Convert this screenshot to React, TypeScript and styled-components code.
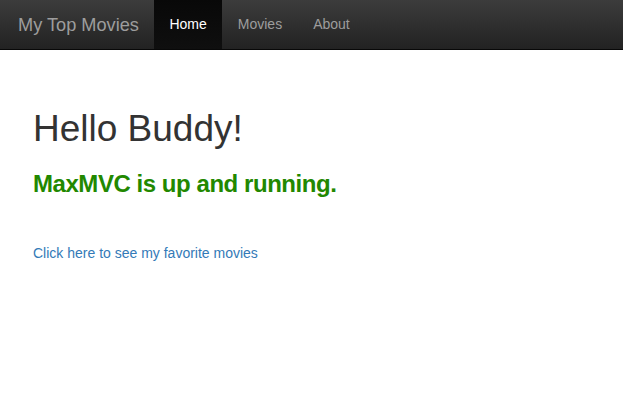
import React from "react";
import styled, { createGlobalStyle } from "styled-components";

const Global = createGlobalStyle`
  html, body { margin: 0; padding: 0; background: #fff; }
  body {
    font-family: "Liberation Sans", Arial, Helvetica, sans-serif;
    font-size: 14px;
    line-height: 1.42857;
    color: #333;
  }
  * { box-sizing: border-box; }
`;

const Navbar = styled.nav`
  display: flex;
  align-items: stretch;
  height: 50px;
  background-image: linear-gradient(to bottom, #3c3c3c 0, #222 100%);
  border-bottom: 1px solid #080808;
`;

const Brand = styled.a`
  display: flex;
  align-items: center;
  padding: 0 15px 0 18px;
  font-size: 18.2px;
  color: #9d9d9d;
  text-decoration: none;
`;

const NavList = styled.ul`
  display: flex;
  list-style: none;
  margin: 0;
  padding: 0;
`;

const NavLink = styled.a<{ $active?: boolean }>`
  display: flex;
  align-items: center;
  height: 100%;
  padding: 0 15.5px 2px;
  font-size: 14px;
  line-height: 20px;
  text-decoration: none;
  color: ${(p) => (p.$active ? "#fff" : "#9d9d9d")};
  background: ${(p) =>
    p.$active ? "linear-gradient(to bottom, #080808 0, #0f0f0f 100%)" : "transparent"};
`;

const Main = styled.main`
  padding: 59px 33px 0;
`;

const Title = styled.h1`
  margin: 0;
  font-size: 37px;
  font-weight: 400;
  line-height: 1.1;
  color: #333;
`;

const Status = styled.h3`
  margin: 21px 0 0;
  font-size: 24px;
  font-weight: 700;
  letter-spacing: -0.45px;
  line-height: 1.1;
  color: #228800;
`;

const MoviesLink = styled.a`
  display: block;
  margin-top: 46px;
  font-size: 14px;
  line-height: 20px;
  color: #337ab7;
  text-decoration: none;
`;

export default function App() {
  return (
    <>
      <Global />
      <Navbar>
        <Brand href="#">My Top Movies</Brand>
        <NavList>
          <li>
            <NavLink href="#" $active>
              Home
            </NavLink>
          </li>
          <li>
            <NavLink href="#">Movies</NavLink>
          </li>
          <li>
            <NavLink href="#">About</NavLink>
          </li>
        </NavList>
      </Navbar>
      <Main>
        <Title>Hello Buddy!</Title>
        <Status>MaxMVC is up and running.</Status>
        <MoviesLink href="#">Click here to see my favorite movies</MoviesLink>
      </Main>
    </>
  );
}
